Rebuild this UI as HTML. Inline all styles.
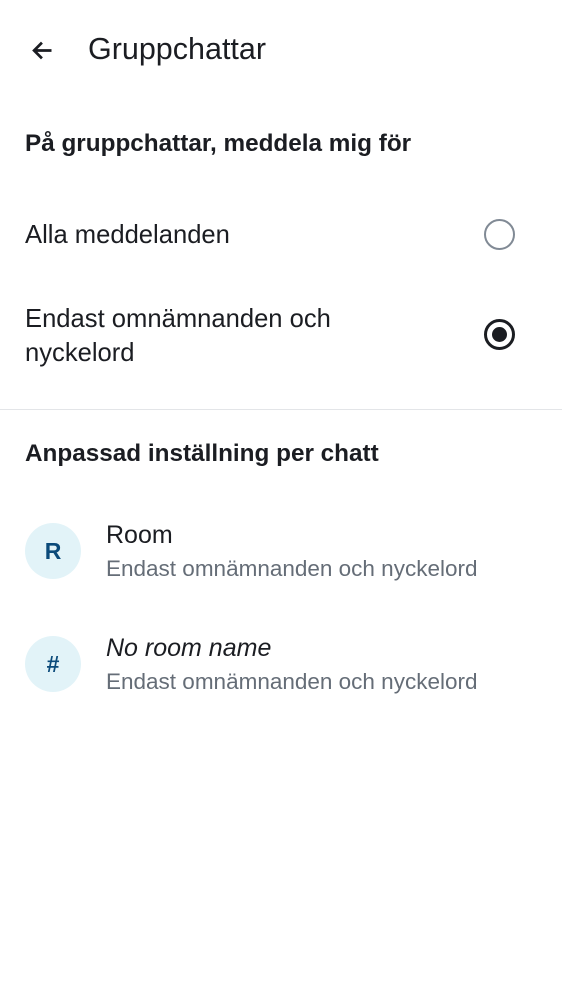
<!DOCTYPE html>
<html><head><meta charset="utf-8"><style>
body{margin:0;width:562px;height:1000px;background:#fff;font-family:"Liberation Sans",sans-serif;color:#1b1d22;position:relative;overflow:hidden}
.a{position:absolute;white-space:nowrap}
</style></head><body>
<svg class="a" style="left:29px;top:37px" width="27" height="27" viewBox="0 0 24 24"><path d="M20 12H5M11.5 5l-7 7 7 7" fill="none" stroke="#1b1d22" stroke-width="2.4"/></svg>
<div class="a" style="left:88px;top:32px;font-size:30.5px">Gruppchattar</div>
<div class="a" style="left:25px;top:130px;font-size:24.3px;font-weight:bold;color:#1b1d22">På gruppchattar, meddela mig för</div>
<div class="a" style="left:25px;top:221px;font-size:25.6px">Alla meddelanden</div>
<div class="a" style="left:484px;top:219px;width:31px;height:31px;border:2.5px solid #818a95;border-radius:50%;box-sizing:border-box"></div>
<div class="a" style="left:25px;top:302px;font-size:25.6px;line-height:34px">Endast omnämnanden och<br>nyckelord</div>
<div class="a" style="left:484px;top:319px;width:31px;height:31px;border:3px solid #1b1d22;border-radius:50%;box-sizing:border-box"></div>
<div class="a" style="left:492px;top:327px;width:15px;height:15px;background:#1b1d22;border-radius:50%"></div>
<div class="a" style="left:0;top:409px;width:562px;height:1px;background:#e3e5e8"></div>
<div class="a" style="left:25px;top:440px;font-size:24.3px;font-weight:bold">Anpassad inställning per chatt</div>
<div class="a" style="left:25px;top:523px;width:56px;height:56px;border-radius:50%;background:#e2f3f8;color:#0b4a7a;font-weight:bold;font-size:23px;text-align:center;line-height:56px">R</div>
<div class="a" style="left:106px;top:521px;font-size:25px">Room</div>
<div class="a" style="left:106px;top:556px;font-size:22.5px;color:#656d77">Endast omnämnanden och nyckelord</div>
<div class="a" style="left:25px;top:636px;width:56px;height:56px;border-radius:50%;background:#e2f3f8;color:#0b4a7a;font-weight:bold;font-size:23px;text-align:center;line-height:56px">#</div>
<div class="a" style="left:106px;top:634px;font-size:25px;font-style:italic">No room name</div>
<div class="a" style="left:106px;top:669px;font-size:22.5px;color:#656d77">Endast omnämnanden och nyckelord</div>
</body></html>
